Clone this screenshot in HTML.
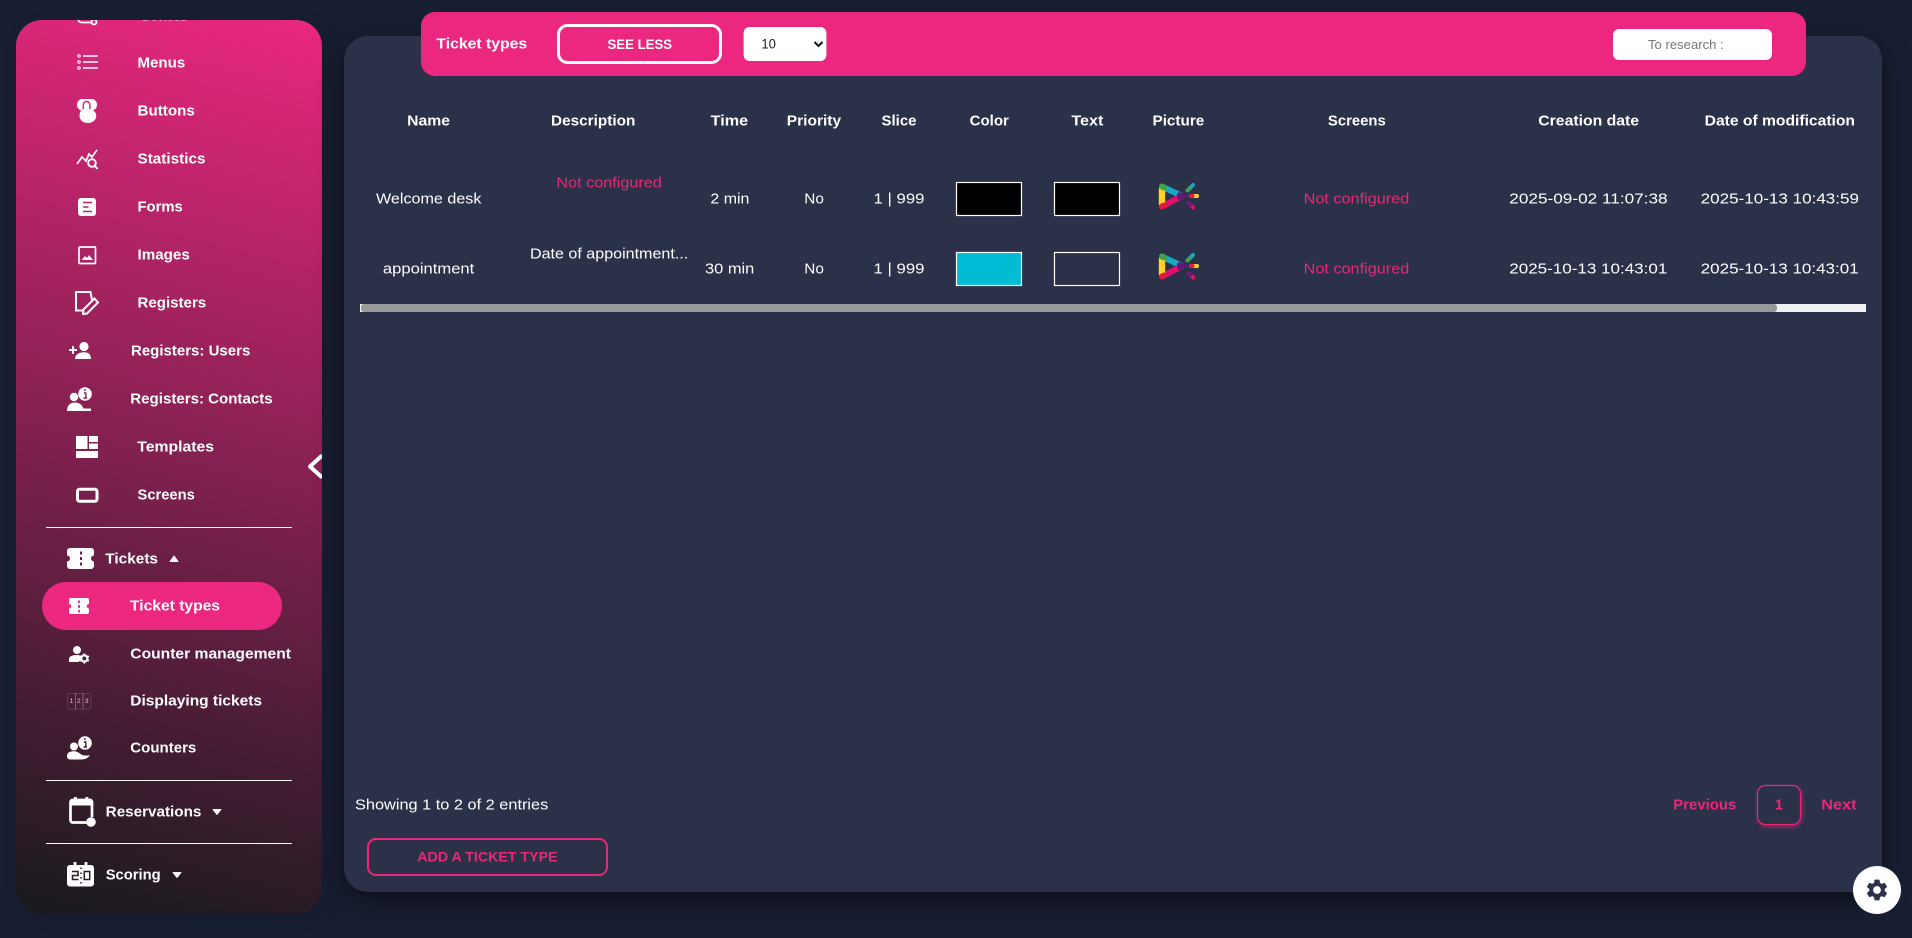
<!DOCTYPE html>
<html lang="en">
<head>
<meta charset="utf-8">
<title>Ticket types</title>
<style>
html,body{margin:0;padding:0;width:1912px;height:938px;overflow:hidden;background:#191f33;font-family:"Liberation Sans",sans-serif}
.abs{position:absolute;box-sizing:border-box}
#side{left:16px;top:20px;width:306px;height:894px;border-radius:26px;background:linear-gradient(194deg,#ea2780 0%,#171a1d 100%);box-shadow:6px 4px 18px rgba(0,0,0,.12)}
#card{left:344px;top:36px;width:1538px;height:856px;border-radius:24px;background:#2a3149;box-shadow:0 8px 26px rgba(0,0,0,.55)}
#bar{left:421px;top:12px;width:1385px;height:64px;border-radius:14px;background:#ec2780}
#pill{left:42px;top:582px;width:240px;height:48px;border-radius:24px;background:#ec2780}
svg{position:absolute;left:0;top:0}
text{font-family:"Liberation Sans",sans-serif;fill:#fff;font-size:15px;transform:translateY(-.9px)}
text[y="125.300"],text[y="48.300"],text[y="49"],text[y="48.500"]{transform:none}
.b{font-weight:700}
.p{fill:#ea277b}
</style>
</head>
<body>
<div class="abs" id="side"></div>
<div class="abs" id="pill"></div>
<div class="abs" id="card"></div>
<div class="abs" id="bar"></div>
<svg width="1912" height="938" viewBox="0 0 1912 938" xmlns="http://www.w3.org/2000/svg">
<defs>
<clipPath id="sc"><rect x="16" y="20" width="306" height="894" rx="26"/></clipPath>
<g id="logo" fill="none" stroke-linecap="round">
<path d="M1162 186.500L1182 196" stroke="#17a9c4" stroke-width="6"/>
<path d="M1162 206.500L1182 196" stroke="#e0106c" stroke-width="6"/>
<path d="M1162 188V205" stroke="#fdd22c" stroke-width="6.400" stroke-linecap="butt"/>
<path d="M1162 186.500L1164 187.500" stroke="#3da24a" stroke-width="6"/>
<path d="M1162 206.500L1164 205.500" stroke="#e2183f" stroke-width="6"/>
<path d="M1179.500 194.800L1183 196L1179.500 197.500" stroke="#5f1a78" stroke-width="5"/>
<path d="M1187.500 190.500L1193 185" stroke="#17a9c4" stroke-width="4"/>
<path d="M1187.500 190.500L1189 189" stroke="#3da24a" stroke-width="4"/>
<path d="M1191 196H1197" stroke="#fdd22c" stroke-width="4"/>
<path d="M1191 196H1192.500" stroke="#e2183f" stroke-width="4"/>
<path d="M1188.500 203.500L1193 207.500" stroke="#e0106c" stroke-width="4"/>
<path d="M1188.500 203.500L1190 205" stroke="#6b1a78" stroke-width="4"/>
</g>
</defs>

<!-- sidebar clipped top item -->
<g clip-path="url(#sc)">
<path d="M78 18Q78 22.500 82 22.500H91" stroke="#fff" stroke-width="1.800" fill="none"/>
<circle cx="94" cy="22" r="2.500" fill="none" stroke="#fff" stroke-width="1.800"/>
<text x="142" y="21.800" textLength="45" lengthAdjust="spacingAndGlyphs" class="b" opacity=".5">Devices</text>
</g>

<!-- Menus icon -->
<g fill="none" stroke="#fff">
<circle cx="79" cy="56" r="1.300" stroke-width="1"/><circle cx="79" cy="62" r="1.300" stroke-width="1"/><circle cx="79" cy="68" r="1.300" stroke-width="1"/>
<path d="M83 56H98M83 62H98M83 68H98" stroke-width="1.400"/>
</g>
<!-- Buttons icon -->
<rect x="77" y="99" width="20" height="11.500" rx="5.500" fill="#fff"/>
<rect x="83.300" y="101.500" width="6.600" height="16" rx="3.300" fill="#fff" stroke="#cf2773" stroke-width="1.400"/>
<path d="M84.500 109C81 110 79.500 112 79.500 115.500C79.500 120 83 123 88 123C92.500 123 96.300 120 96.300 115.500C96.300 112 92.500 109.500 89 109Z" fill="#fff"/>
<rect x="84.300" y="103" width="4.600" height="10" rx="2.300" fill="#fff"/>
<!-- Statistics icon -->
<g fill="none" stroke="#fff" stroke-width="1.700">
<path d="M77 164L82 157L86 161L89 154L92 157L97 150"/>
<circle cx="92" cy="163" r="3.800" stroke-width="1.900"/>
<path d="M95 166L97.500 169" stroke-width="2"/>
</g>
<!-- Forms icon -->
<rect x="78" y="198" width="18" height="18" rx="3" fill="#fff"/>
<path d="M83 202.500H92M83 207H88.500M83 211.500H92" stroke="#bb266d" stroke-width="1.600"/>
<!-- Images icon -->
<rect x="79" y="247" width="16.500" height="16.500" rx="1" fill="none" stroke="#fff" stroke-width="1.700"/>
<path d="M81.500 260L85 256L87 258L89 255L93 260Z" fill="#fff"/>
<!-- Registers icon -->
<path d="M84 310.500H76V292H90.500L92 300" fill="none" stroke="#fff" stroke-width="2"/>
<path d="M94.500 298.500L98 302.500L87 313.500L83 314L83.500 309.500Z" fill="none" stroke="#fff" stroke-width="2"/>
<!-- Registers users -->
<path d="M69 350H77M73 346V354" stroke="#fff" stroke-width="1.900"/>
<circle cx="84" cy="346.500" r="4.600" fill="#fff"/>
<path d="M75 359C75 354 80 352.300 84 352.300C88 352.300 91 354 91 359Z" fill="#fff"/>
<!-- Registers contacts -->
<circle cx="74" cy="397" r="4.200" fill="#fff"/>
<path d="M67 411C67 405 70.500 402.500 75 402.500C80 402.500 82 405 83.500 408.500H91V411Z" fill="#fff"/>
<circle cx="85" cy="394" r="6.800" fill="#fff"/>
<path d="M84 390H85.800M83.800 393H85.800V398M83.500 398H87" stroke="#8c2153" stroke-width="1.400" fill="none"/>
<!-- Templates -->
<path d="M76 436H87.500V449H76ZM89 436H98V442H89ZM89 443.500H98V449H89ZM76 451H98V458H76Z" fill="#fff"/>
<!-- Screens -->
<rect x="77.500" y="489.300" width="19.500" height="12" rx="2" fill="none" stroke="#fff" stroke-width="3"/>
<!-- Divider 1 -->
<rect x="46" y="527" width="246" height="1" fill="#fff"/>
<!-- Tickets icon -->
<path d="M70 548H91a3 3 0 0 1 3 3V555.500a3 3 0 0 0 0 6V566a3 3 0 0 1-3 3H70a3 3 0 0 1-3-3V561.500a3 3 0 0 0 0-6V551a3 3 0 0 1 3-3Z" fill="#fff"/>
<path d="M81 551.500V554.500M81 557V560M81 562.500V565.500" stroke="#6b1f45" stroke-width="2"/>
<path d="M170 561.500L174 556L178 561.500Z" fill="#fff" stroke="#fff" stroke-linejoin="round"/>
<!-- Ticket types icon -->
<path d="M71 598H87a2 2 0 0 1 2 2V604a2.200 2.200 0 0 0 0 4.500V612a2 2 0 0 1-2 2H71a2 2 0 0 1-2-2V608.500a2.200 2.200 0 0 0 0-4.500V600a2 2 0 0 1 2-2Z" fill="#fff"/>
<path d="M79 600.500V603M79 605V608M79 610V612.500" stroke="#ec2780" stroke-width="1.800"/>
<!-- Counter management -->
<circle cx="77" cy="650" r="4" fill="#fff"/>
<path d="M69 662V659C69 656.500 72 655 77 655C79 655 80.500 655.500 81.500 656.500L79 662Z" fill="#fff"/>
<circle cx="84.300" cy="658.500" r="3.100" fill="none" stroke="#fff" stroke-width="2.200"/>
<path d="M84.300 653.500V655M84.300 662V663.500M79.800 656L81 657M87.500 660L88.800 661M79.800 661L81 660M87.500 657L88.800 656" stroke="#fff" stroke-width="1.800"/>
<!-- Displaying tickets -->
<g opacity=".45" fill="none" stroke="#fff" stroke-width=".7">
<rect x="67.500" y="693.500" width="23.500" height="15.500" rx="2" opacity=".4"/>
<path d="M75.500 693V709M83 693V709"/>
</g>
<text x="69.500" y="704" style="font-size:6.500px" opacity=".8">1</text>
<text x="77" y="704" style="font-size:6.500px" opacity=".8">2</text>
<text x="85" y="704" style="font-size:6.500px" opacity=".8">3</text>
<!-- Counters -->
<circle cx="74" cy="746.500" r="4" fill="#fff"/>
<path d="M67 756C67 752.500 70 751.300 74 751.300C79 751.300 80 755 84 755.500H90C88 758 85 759.500 81 759.500H70C68 759.500 67 758 67 756Z" fill="#fff"/>
<circle cx="85" cy="743" r="6.800" fill="#fff"/>
<path d="M84 739H85.800M83.800 742H85.800V747M83.500 747H87" stroke="#471c32" stroke-width="1.400" fill="none"/>
<!-- Divider 2 -->
<rect x="46" y="780" width="246" height="1" fill="#fff"/>
<!-- Reservations icon -->
<path d="M87 822.500H72.500A2.500 2.500 0 0 1 70.500 820V802A2.500 2.500 0 0 1 72.500 800H90.500A2.500 2.500 0 0 1 92 802V817" fill="none" stroke="#fff" stroke-width="2.700"/>
<path d="M70 801H93V805.500H70ZM74 797H76.800V801H74ZM85.500 797H88.300V801H85.500Z" fill="#fff"/>
<circle cx="91" cy="822" r="4.800" fill="#fff"/>
<path d="M213 809.500H221L217 814.500Z" fill="#fff" stroke="#fff" stroke-linejoin="round"/>
<!-- Divider 3 -->
<rect x="46" y="843" width="246" height="1" fill="#fff"/>
<!-- Scoring icon -->
<rect x="67" y="865" width="27" height="21.500" rx="3" fill="#fff"/>
<path d="M75 862V866M86 862V866" stroke="#fff" stroke-width="2.800"/>
<path d="M72 871.500H78V875.500H72.500V879.500H78.500M81 867.500V869M81 872.500V874M81 877V878.500M81 882V883.500" stroke="#2d1a23" stroke-width="1.500" fill="none"/>
<rect x="84.300" y="871.500" width="5.400" height="8" fill="none" stroke="#2d1a23" stroke-width="1.500"/>
<path d="M173 872.500H181L177 877.500Z" fill="#fff" stroke="#fff" stroke-linejoin="round"/>

<!-- Sidebar chevron -->
<g clip-path="url(#sc)">
<path d="M321 456.500L310 466.500L321 476.500" fill="none" stroke="#fff" stroke-width="4" stroke-linecap="round" stroke-linejoin="round"/>
</g>

<!-- Sidebar labels -->
<g class="b">
<text class="b" x="137.500" y="68.300" textLength="47.700" lengthAdjust="spacingAndGlyphs">Menus</text>
<text class="b" x="137.500" y="116.300" textLength="57.300" lengthAdjust="spacingAndGlyphs">Buttons</text>
<text class="b" x="137.500" y="164.300" textLength="68" lengthAdjust="spacingAndGlyphs">Statistics</text>
<text class="b" x="137.500" y="212.300" textLength="45.300" lengthAdjust="spacingAndGlyphs">Forms</text>
<text class="b" x="137.500" y="260.300" textLength="52.300" lengthAdjust="spacingAndGlyphs">Images</text>
<text class="b" x="137.500" y="308.300" textLength="68.700" lengthAdjust="spacingAndGlyphs">Registers</text>
<text class="b" x="131" y="356.300" textLength="119.300" lengthAdjust="spacingAndGlyphs">Registers: Users</text>
<text class="b" x="130.300" y="404.300" textLength="142.300" lengthAdjust="spacingAndGlyphs">Registers: Contacts</text>
<text class="b" x="137.300" y="452.300" textLength="76.700" lengthAdjust="spacingAndGlyphs">Templates</text>
<text class="b" x="137.500" y="500.300" textLength="57.300" lengthAdjust="spacingAndGlyphs">Screens</text>
<text class="b" x="105.300" y="564.300" textLength="52.700" lengthAdjust="spacingAndGlyphs">Tickets</text>
<text class="b" x="130" y="611.300" textLength="90" lengthAdjust="spacingAndGlyphs">Ticket types</text>
<text class="b" x="130.300" y="659.300" textLength="160.700" lengthAdjust="spacingAndGlyphs">Counter management</text>
<text class="b" x="130.300" y="706.300" textLength="131.700" lengthAdjust="spacingAndGlyphs">Displaying tickets</text>
<text class="b" x="130.300" y="753.300" textLength="66" lengthAdjust="spacingAndGlyphs">Counters</text>
<text class="b" x="105.700" y="817.300" textLength="95.700" lengthAdjust="spacingAndGlyphs">Reservations</text>
<text class="b" x="105.700" y="880.300" textLength="55" lengthAdjust="spacingAndGlyphs">Scoring</text>
</g>

<!-- Toolbar -->
<text class="b" x="436.400" y="48.300" textLength="90.700" lengthAdjust="spacingAndGlyphs">Ticket types</text>
<rect x="558.500" y="25.500" width="162" height="37" rx="9" fill="none" stroke="#fff" stroke-width="3"/>
<text class="b" x="607.500" y="49" textLength="64.600" lengthAdjust="spacingAndGlyphs" style="font-size:14px">SEE LESS</text>
<rect x="743.600" y="27" width="82.800" height="34" rx="6" fill="#fff"/>
<text x="761.400" y="48.500" textLength="14.600" lengthAdjust="spacingAndGlyphs" style="fill:#222;font-size:13.500px">10</text>
<path d="M814.500 42L818.500 46L822.500 42" fill="none" stroke="#111" stroke-width="2"/>
<rect x="1613" y="29" width="159" height="31" rx="6" fill="#fff"/>
<text x="1648" y="49" textLength="75.700" lengthAdjust="spacingAndGlyphs" style="fill:#777;font-size:13px">To research :</text>

<!-- Table header -->
<text class="b" x="407.100" y="125.300" textLength="42.900" lengthAdjust="spacingAndGlyphs">Name</text>
<text class="b" x="551" y="125.300" textLength="84.300" lengthAdjust="spacingAndGlyphs">Description</text>
<text class="b" x="710.700" y="125.300" textLength="37.500" lengthAdjust="spacingAndGlyphs">Time</text>
<text class="b" x="786.800" y="125.300" textLength="54.300" lengthAdjust="spacingAndGlyphs">Priority</text>
<text class="b" x="881.500" y="125.300" textLength="35" lengthAdjust="spacingAndGlyphs">Slice</text>
<text class="b" x="969.600" y="125.300" textLength="39.300" lengthAdjust="spacingAndGlyphs">Color</text>
<text class="b" x="1071.400" y="125.300" textLength="32" lengthAdjust="spacingAndGlyphs">Text</text>
<text class="b" x="1152.500" y="125.300" textLength="51.800" lengthAdjust="spacingAndGlyphs">Picture</text>
<text class="b" x="1327.900" y="125.300" textLength="57.900" lengthAdjust="spacingAndGlyphs">Screens</text>
<text class="b" x="1538.300" y="125.300" textLength="100.700" lengthAdjust="spacingAndGlyphs">Creation date</text>
<text class="b" x="1704.700" y="125.300" textLength="150.300" lengthAdjust="spacingAndGlyphs">Date of modification</text>

<!-- Row 1 -->
<text x="376" y="204.300" textLength="105.400" lengthAdjust="spacingAndGlyphs">Welcome desk</text>
<text class="p" x="556.400" y="188.300" textLength="105.400" lengthAdjust="spacingAndGlyphs">Not configured</text>
<text x="710.400" y="204.300" textLength="39" lengthAdjust="spacingAndGlyphs">2 min</text>
<text x="804.300" y="204.300" textLength="19.600" lengthAdjust="spacingAndGlyphs">No</text>
<text x="873.500" y="204.300" textLength="51" lengthAdjust="spacingAndGlyphs">1 | 999</text>
<rect x="956.500" y="182.500" width="65" height="33" fill="#000" stroke="#fff" stroke-width="1.200"/>
<rect x="1054.500" y="182.500" width="65" height="33" fill="#000" stroke="#fff" stroke-width="1.200"/>
<use href="#logo"/>
<text class="p" x="1303.600" y="204.300" textLength="105.700" lengthAdjust="spacingAndGlyphs">Not configured</text>
<text x="1509.300" y="204.300" textLength="158.300" lengthAdjust="spacingAndGlyphs">2025-09-02 11:07:38</text>
<text x="1700.700" y="204.300" textLength="158.300" lengthAdjust="spacingAndGlyphs">2025-10-13 10:43:59</text>

<!-- Row 2 -->
<text x="382.900" y="274.300" textLength="91.400" lengthAdjust="spacingAndGlyphs">appointment</text>
<text x="530" y="259.300" textLength="158.200" lengthAdjust="spacingAndGlyphs">Date of appointment...</text>
<text x="705" y="274.300" textLength="49.300" lengthAdjust="spacingAndGlyphs">30 min</text>
<text x="804.300" y="274.300" textLength="19.600" lengthAdjust="spacingAndGlyphs">No</text>
<text x="873.500" y="274.300" textLength="51" lengthAdjust="spacingAndGlyphs">1 | 999</text>
<rect x="956.500" y="252.500" width="65" height="33" fill="#00bcd4" stroke="#fff" stroke-width="1.200"/>
<rect x="1054.500" y="252.500" width="65" height="33" fill="#2a3149" stroke="#fff" stroke-width="1.200"/>
<use href="#logo" y="70"/>
<text class="p" x="1303.600" y="274.300" textLength="105.700" lengthAdjust="spacingAndGlyphs">Not configured</text>
<text x="1509.300" y="274.300" textLength="158" lengthAdjust="spacingAndGlyphs">2025-10-13 10:43:01</text>
<text x="1700.700" y="274.300" textLength="158" lengthAdjust="spacingAndGlyphs">2025-10-13 10:43:01</text>

<!-- Scrollbar -->
<rect x="360" y="304" width="1506" height="8" fill="#f1f1f1"/>
<rect x="361" y="304" width="1416" height="8" rx="3" fill="#999"/>

<!-- Footer -->
<text x="355" y="810.300" textLength="193.300" lengthAdjust="spacingAndGlyphs">Showing 1 to 2 of 2 entries</text>
<rect x="368" y="839" width="239" height="36" rx="8" fill="none" stroke="#ea277b" stroke-width="2"/>
<text class="b p" x="417.300" y="862.300" textLength="140.300" lengthAdjust="spacingAndGlyphs" style="font-size:14px">ADD A TICKET TYPE</text>
<text class="b p" x="1673.300" y="810.300" textLength="63" lengthAdjust="spacingAndGlyphs">Previous</text>
<rect x="1757.500" y="785.500" width="43" height="39" rx="8" fill="#2a3149" stroke="#ea277b" stroke-width="1.200" style="filter:drop-shadow(1px 2px 2.500px rgba(234,39,123,.55))"/>
<text class="b p" x="1775" y="810.300" textLength="8" lengthAdjust="spacingAndGlyphs">1</text>
<text class="b p" x="1821.300" y="810.300" textLength="35.300" lengthAdjust="spacingAndGlyphs">Next</text>

<!-- Settings button -->
<circle cx="1877" cy="890" r="24" fill="#fff"/>
<path transform="translate(1864.100 877.100) scale(1.075)" fill="#2a3149" d="M19.140 12.940c.04-.3.06-.61.06-.94 0-.32-.02-.64-.07-.94l2.030-1.580a.49.49 0 0 0 .12-.61l-1.920-3.320a.488.488 0 0 0-.59-.22l-2.390.96c-.5-.38-1.030-.7-1.620-.94l-.36-2.540a.484.484 0 0 0-.48-.41h-3.840c-.24 0-.43.17-.47.41l-.36 2.540c-.59.24-1.130.57-1.620.94l-2.390-.96c-.22-.08-.47 0-.59.22L2.740 8.870c-.12.21-.08.47.12.61l2.030 1.580c-.05.3-.09.63-.09.94s.02.64.07.94l-2.030 1.580a.49.49 0 0 0-.12.61l1.920 3.320c.12.22.37.29.59.22l2.390-.96c.5.38 1.030.7 1.620.94l.36 2.540c.05.24.24.41.48.41h3.840c.24 0 .44-.17.47-.41l.36-2.540c.59-.24 1.130-.56 1.620-.94l2.390.96c.22.08.47 0 .59-.22l1.920-3.320c.12-.22.07-.47-.12-.61l-2.010-1.580zM12 15.600c-1.980 0-3.600-1.620-3.600-3.600s1.620-3.600 3.600-3.600 3.600 1.620 3.600 3.600-1.620 3.600-3.600 3.600z"/>
</svg>
</body>
</html>
